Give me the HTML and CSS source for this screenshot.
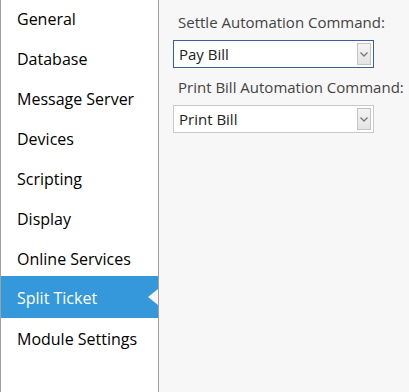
FILE: index.html
```html
<!DOCTYPE html>
<html>
<head>
<meta charset="utf-8">
<link rel="stylesheet" href="styles.css">
</head>
<body>
<div class="app">
  <nav class="sidebar">
    <div class="item">General</div>
    <div class="item">Database</div>
    <div class="item">Message Server</div>
    <div class="item">Devices</div>
    <div class="item">Scripting</div>
    <div class="item">Display</div>
    <div class="item">Online Services</div>
    <div class="item selected">Split Ticket</div>
    <div class="item">Module Settings</div>
  </nav>
  <main class="content">
    <div class="label">Settle Automation Command:</div>
    <div class="select focused">
      <span class="value">Pay Bill</span>
      <span class="btn"><svg width="8" height="5" viewBox="0 0 8 5"><path d="M0.5 0.5 L4 4 L7.5 0.5" fill="none" stroke="#777" stroke-width="1.3"/></svg></span>
    </div>
    <div class="label second">Print Bill Automation Command:</div>
    <div class="select">
      <span class="value">Print Bill</span>
      <span class="btn"><svg width="8" height="5" viewBox="0 0 8 5"><path d="M0.5 0.5 L4 4 L7.5 0.5" fill="none" stroke="#777" stroke-width="1.3"/></svg></span>
    </div>
  </main>
</div>
</body>
</html>
```

FILE: styles.css
```css
* { box-sizing: border-box; }
html, body { margin: 0; padding: 0; }
body {
  width: 409px;
  height: 392px;
  overflow: hidden;
  font-family: "Open Sans", "Noto Sans", sans-serif;
  background: #f7f7f7;
}
.app {
  display: flex;
  height: 392px;
}
.sidebar {
  width: 159px;
  flex: none;
  background: #fff;
  border-left: 1px solid #a0a0a0;
  border-right: 1px solid #a0a0a0;
  padding-top: 0;
}
.item {
  height: 40px;
  line-height: 38px;
  padding-left: 16px;
  font-size: 16px;
  color: #000;
  white-space: nowrap;
}
.item.selected {
  position: relative;
  background: #3498db;
  color: #fff;
  margin-top: -4px;
  padding-top: 4px;
  height: 42px;
  line-height: 37px;
  margin-bottom: 2px;
}
.item.selected::after {
  content: "";
  position: absolute;
  right: 0;
  top: 13px;
  border-style: solid;
  border-width: 8px 10px 8px 0;
  border-color: transparent #f7f7f7 transparent transparent;
}
.content {
  flex: 1;
  padding: 11px 0 0 14px;
}
.label {
  font-size: 15px;
  color: #444;
  line-height: 22px;
  padding-left: 5px;
  white-space: nowrap;
}
.label.second {
  margin-top: 8px;
}
.select {
  margin-top: 7px;
  width: 201px;
  height: 28px;
  background: #fff;
  border: 1px solid #c9c9c9;
  display: flex;
  align-items: center;
  justify-content: space-between;
  padding: 0 2px 0 5px;
}
.select.focused {
  border-color: #3d5d9c;
}
.value {
  font-size: 15px;
  color: #222;
}
.btn {
  width: 14px;
  height: 22px;
  border: 1px solid #c3c3c3;
  background: linear-gradient(#f4f4f4, #e4e4e4);
  display: flex;
  align-items: center;
  justify-content: center;
}
```
